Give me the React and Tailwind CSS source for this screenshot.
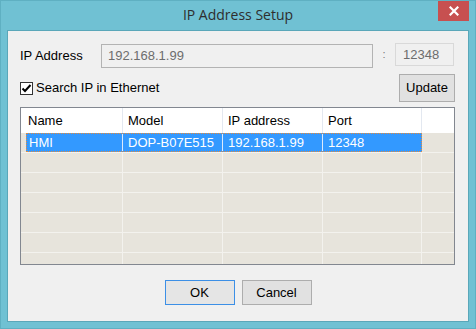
import React from "react";

const rowCls = "flex h-[20px] border-b border-[#f3f2ee] bg-[#e7e4dc] shrink-0";

function EmptyRow() {
  return (
    <div className={rowCls}>
      <div className="w-[102px] border-r border-[#f3f2ee]" />
      <div className="w-[100px] border-r border-[#f3f2ee]" />
      <div className="w-[100px] border-r border-[#f3f2ee]" />
      <div className="w-[99px] border-r border-[#f3f2ee]" />
      <div className="flex-1" />
    </div>
  );
}

export default function App() {
  return (
    <div
      className="w-[476px] h-[329px] bg-[#70c1d3] border border-[#5fb0c2] flex flex-col overflow-hidden"
      style={{ fontFamily: '"Liberation Sans", Arial, sans-serif' }}
    >
      {/* Title bar */}
      <div className="h-[29px] flex shrink-0 relative">
        <div
          className="flex-1 text-center text-[14px] text-[#2e2e2e] pt-[3px] pl-[0px]"
          style={{ fontFamily: '"Open Sans", sans-serif' }}
        >
          IP Address Setup
        </div>
        <div className="absolute right-[6px] top-[-1px] w-[31px] h-[21px] bg-[#c75050] flex items-center justify-center">
          <svg width="10" height="10" viewBox="0 0 10 10">
            <path d="M1.5 1.5 L8.5 8.5 M8.5 1.5 L1.5 8.5" stroke="#fff" strokeWidth="2.2" strokeLinecap="square" />
          </svg>
        </div>
      </div>

      {/* Client area */}
      <div className="mx-[6px] h-[292px] border border-[#5aa7b9] bg-[#f0f0f0] flex flex-col pl-[12px] pr-[13px] pt-[12px] text-[13px] text-black">
        {/* Row 1 */}
        <div className="flex h-[25px] shrink-0">
          <div className="w-[81px] flex items-center">IP Address</div>
          <div className="mt-[1px] w-[272px] h-[24px] border border-[#b3b3b3] flex items-center pl-[6px] text-[#6d6d6d]">
            192.168.1.99
          </div>
          <div className="w-[22px] flex items-start justify-center text-[#7a7a7a] text-[11px] pt-[3px]">:</div>
          <div className="w-[59px] h-[23px] border border-[#d9d9d9] flex items-center pl-[7px] text-[#6d6d6d]">
            12348
          </div>
          <div className="w-[1px]" />
        </div>

        {/* Row 2 */}
        <div className="flex h-[28px] mt-[6px] items-center shrink-0">
          <svg width="13" height="13" viewBox="0 0 13 13" className="shrink-0">
            <rect x="0.5" y="0.5" width="12" height="12" fill="#fff" stroke="#333" />
            <path d="M2.5 6.5 L5 9 L10.5 3" stroke="#000" strokeWidth="2" fill="none" />
          </svg>
          <span className="ml-[3px]">Search IP in Ethernet</span>
          <div className="ml-auto w-[56px] h-[28px] border border-[#adadad] bg-[#e1e1e1] flex items-center justify-center">
            Update
          </div>
        </div>

        {/* Table */}
        <div className="mt-[5px] h-[158px] border border-[#828790] bg-white flex flex-col overflow-hidden shrink-0">
          <div className="flex h-[25px] shrink-0 bg-white">
            <div className="w-[102px] border-r border-[#e3e8f0] flex items-center pl-[7px]">Name</div>
            <div className="w-[100px] border-r border-[#e3e8f0] flex items-center pl-[5px]">Model</div>
            <div className="w-[100px] border-r border-[#e3e8f0] flex items-center pl-[5px]">IP address</div>
            <div className="w-[99px] border-r border-[#e3e8f0] flex items-center pl-[5px]">Port</div>
            <div className="flex-1" />
          </div>
          {/* Selected row */}
          <div className={rowCls}>
            <div className="w-[5px]" />
            <div className="w-[396px] flex bg-[#3399ff] border border-dotted border-[#e58a3a] text-white">
              <div className="w-[96px] border-r border-[#dceafc] flex items-center pl-[2px]">HMI</div>
              <div className="w-[100px] border-r border-[#dceafc] flex items-center pl-[5px]">DOP-B07E515</div>
              <div className="w-[100px] border-r border-[#dceafc] flex items-center pl-[5px]">192.168.1.99</div>
              <div className="w-[98px] flex items-center pl-[5px]">12348</div>
            </div>
            <div className="flex-1" />
          </div>
          <EmptyRow />
          <EmptyRow />
          <EmptyRow />
          <EmptyRow />
          <EmptyRow />
          <EmptyRow />
        </div>

        {/* Buttons */}
        <div className="flex justify-center gap-[7px] mt-[15px] pl-[1px]">
          <div className="w-[70px] h-[25px] border border-[#3c8fe6] bg-[#e5e5e5] flex items-center justify-center">OK</div>
          <div className="w-[70px] h-[25px] border border-[#adadad] bg-[#e1e1e1] flex items-center justify-center">Cancel</div>
        </div>
      </div>
    </div>
  );
}
